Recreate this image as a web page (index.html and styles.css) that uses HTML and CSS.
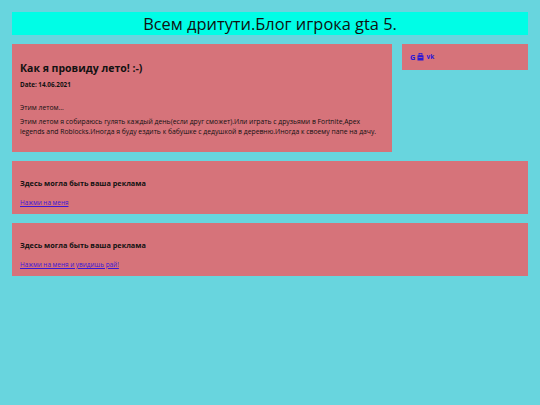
FILE: index.html
```html
<!DOCTYPE html>
<html lang="ru">
<head>
    <meta charset="UTF-8">
    <meta name="viewport" content="width=device-width, initial-scale=1.0">
    <title>Блог игрока gta 5</title>
    <link rel="stylesheet" href="styles.css">
</head>
<body>

    <div class="header">
        <h1>Всем дритути.Блог игрока gta 5.</h1>
    </div>

    <div class="row">
        <!-- Пост -->
        <div class="card post">
            <h2>Как я провиду лето! :-)</h2>
            <h5>Date: 14.06.2021</h5>
            <p>Этим летом...</p>
            <p>Этим летом я собираюсь гулять каждый день(если друг сможет).Или играть с друзьями в Fortnite,Apex legends and Roblocks.Иногда я буду ездить к бабушке с дедушкой в деревню.Иногда к своему папе на дачу.</p>
        </div>

        <!-- Соцсети -->
        <div class="card side">
            <a href="#" class="social">G</a>
            <a href="#" class="social">
                <svg width="7" height="8" viewBox="0 0 7 8"><rect x="2" y="0.5" width="3" height="1.8" fill="none" stroke="#2b17d6" stroke-width="0.8"/><rect x="0.5" y="2.3" width="6" height="5.2" fill="#2b17d6"/><rect x="1.5" y="4.3" width="4" height="0.7" fill="#d6737a"/></svg>
            </a>
            <a href="#" class="social vk">vk</a>
        </div>
    </div>

    <div class="card ad">
        <h4>Здесь могла быть ваша реклама</h4>
        <a href="#">Нажми на меня</a>
    </div>

    <div class="card ad">
        <h4>Здесь могла быть ваша реклама</h4>
        <a href="#">Нажми на меня и увидишь рай!</a>
    </div>

</body>
</html>
```

FILE: styles.css
```css
body {
    font-family: "Open Sans", sans-serif;
    margin: 0;
    padding: 12px;
    background-color: #68d5de;
    color: #111;
}
.header {
    background-color: #00fde6;
    text-align: center;
    height: 23px;
    margin-bottom: 9px;
}
.header h1 {
    margin: 0;
    font-size: 16.4px;
    font-weight: normal;
    line-height: 23px;
}
.row {
    display: flex;
    gap: 10px;
    align-items: flex-start;
}
.card {
    background-color: #d6737a;
    padding: 0 8px;
    box-sizing: border-box;
}
.post {
    width: 380px;
    height: 108px;
    padding-top: 17px;
}
.post h2 {
    font-size: 10.5px;
    line-height: 14px;
    margin: 0 0 6px;
}
.post h5 {
    font-size: 6.3px;
    line-height: 8px;
    margin: 0 0 14px;
}
.post p {
    font-size: 6.8px;
    margin: 0 0 4px;
    line-height: 10px;
}
.post p + p {
    margin-top: 1px;
}
.side {
    flex: 1;
    height: 26px;
    display: flex;
    align-items: center;
    gap: 2px;
    line-height: 10px;
}
.social {
    color: #2b17d6;
    font-weight: bold;
    font-size: 7.5px;
    text-decoration: none;
    display: flex;
}
.vk {
    font-size: 6.5px;
}
.ad {
    margin-top: 9px;
    height: 53px;
    padding-top: 17px;
    line-height: 10px;
}
.ad h4 {
    font-size: 7.3px;
    line-height: 10px;
    margin: 0 0 6px;
}
.ad a {
    display: inline-block;
    font-size: 6.4px;
    line-height: 10px;
    color: #3a17d6;
}
```
